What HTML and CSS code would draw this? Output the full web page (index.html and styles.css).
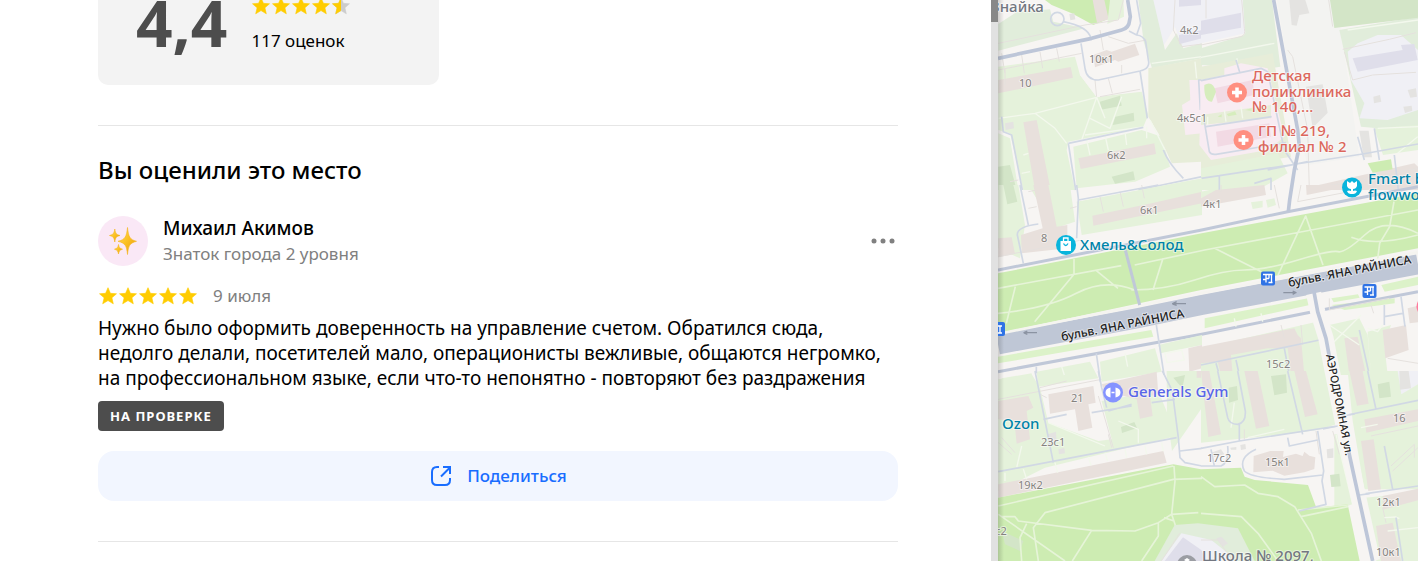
FILE: index.html
```html
<!DOCTYPE html>
<html lang="ru">
<head>
<meta charset="utf-8">
<meta name="viewport" content="width=device-width, initial-scale=1">
<title>Отзывы</title>
<link rel="stylesheet" href="styles.css">
</head>
<body>
<svg class="defs" aria-hidden="true">
  <defs>
    <path id="star" d="M10 1.7 12.4 7.3 18.5 7.8 13.9 11.8 15.3 17.8 10 14.6 4.7 17.8 6.1 11.8 1.5 7.8 7.6 7.3Z" stroke-width=".6" stroke-linejoin="round"/>
    <linearGradient id="gold" x1="0" x2="1" y1="0" y2="1">
      <stop offset="0" stop-color="#ffdf62"/><stop offset=".5" stop-color="#fbc021"/><stop offset="1" stop-color="#e59a10"/>
    </linearGradient>
    <linearGradient id="edge"><stop offset="0" stop-color="#000" stop-opacity=".16"/><stop offset="1" stop-color="#000" stop-opacity="0"/></linearGradient>
  </defs>
</svg>
<div class="layout">
  <main class="panel">
    <div class="content">
      <section class="summary">
        <div class="score">4,4</div>
        <div class="summary-side">
          <svg class="stars" viewBox="0 0 100 20" role="img" aria-label="4,4 из 5">
            <g class="on"><use href="#star"/><use href="#star" x="20"/><use href="#star" x="40"/><use href="#star" x="60"/></g>
            <use class="off" href="#star" x="80"/>
            <clipPath id="half"><path d="M80 0h10v20H80z"/></clipPath>
            <g clip-path="url(#half)"><use class="on" href="#star" x="80"/></g>
          </svg>
          <div class="count">117 оценок</div>
        </div>
      </section>
      <section class="review">
        <h2 class="title">Вы оценили это место</h2>
        <div class="author">
          <svg class="avatar" viewBox="0 0 50 50" aria-hidden="true">
            <circle cx="25" cy="25" r="25" fill="#fae8f6"/>
            <g fill="url(#gold)" stroke="#f5b51c" stroke-width=".6">
              <path d="M29.500 11.500C30.500 20.500 31.500 23.500 38.500 25.300 31.500 27.300 30.500 29.500 29.500 38.500 28.500 29.500 27.500 27.300 20 25.300 27.500 23.500 28.500 20.500 29.500 11.500Z"/>
              <path d="M16.800 13C17.500 17.500 18.300 18.500 22 19.500 18.300 20.500 17.500 21.500 16.800 26 16 21.500 15.300 20.500 11.500 19.500 15.300 18.500 16 17.500 16.800 13Z"/>
              <path d="M20.500 28.500C21 31.500 21.700 32.300 24.500 33.200 21.700 34.100 21 35 20.500 38 20 35 19.300 34.100 16.500 33.200 19.300 32.300 20 31.500 20.500 28.500Z"/>
            </g>
          </svg>
          <div class="who">
            <div class="name">Михаил Акимов</div>
            <div class="level">Знаток города 2 уровня</div>
          </div>
          <button class="more" type="button" aria-label="Ещё">
            <svg viewBox="0 0 24 6" aria-hidden="true"><circle cx="3" cy="3" r="2.500"/><circle cx="12" cy="3" r="2.500"/><circle cx="21" cy="3" r="2.500"/></svg>
          </button>
        </div>
        <div class="rate">
          <svg class="stars" viewBox="0 0 100 20" role="img" aria-label="5 из 5">
            <g class="on"><use href="#star"/><use href="#star" x="20"/><use href="#star" x="40"/><use href="#star" x="60"/><use href="#star" x="80"/></g>
          </svg>
          <time class="date">9 июля</time>
        </div>
        <p class="text">Нужно было оформить доверенность на управление счетом. Обратился сюда, недолго делали, посетителей мало, операционисты вежливые, общаются негромко, на профессиональном языке, если что-то непонятно - повторяют без раздражения</p>
        <span class="badge">НА ПРОВЕРКЕ</span>
        <button class="share" type="button">
          <svg viewBox="0 0 24 24" aria-hidden="true"><path d="M10 3H8Q3 3 3 8V16Q3 21 8 21H16Q21 21 21 16V14M12 12.500 20.500 4M14 3H21V10"/></svg>
          Поделиться
        </button>
      </section>
    </div>
    <div class="scrollbar"><div class="thumb"></div></div>
  </main>
  <aside class="map">
    <svg viewBox="0 0 420 561" preserveAspectRatio="xMinYMin slice" role="img" aria-label="Карта">
      <g transform="scale(.33333)">
        <!-- north-west block -->
        <g transform="translate(-39 0)">
          <path class="sage" d="M40 72 95 36 195 28 205 65 300 85 40 152Z"/>
          <path class="park" d="M180 0H400L375 55 325 75 260 40 200 15Z"/>
          <path class="bld" d="M323 0h35l13 58-35 10z"/>
          <path class="lawn" d="M375 0h40l2 50-50 22z"/>
          <path class="lilac" d="M502 0H651V130L590 140 570 80 525 155Z"/>
          <path class="sage" d="M460 0h45l35 150 35-50 20 45 56-15v45l-150 30-25-80z"/>
          <path class="lilac-b" d="M582 0h69v15l-69 5zM582 105l69-15v25l-69 18z"/>
          <path class="lawn" d="M40 200 270 170 285 225 335 290 470 275 490 345 475 380 250 425 245 450 270 570H115L75 400 40 390Z"/>
          <path class="lawn" d="M40 400 75 415 100 570H40Z"/>
          <path class="lawn" d="M265 440 470 390 530 410 555 500 450 545 275 565Z"/>
          <path class="white" d="M300 205 340 238 468 212 490 345 473 272 335 292 285 225Z"/>
          <path class="olive" d="M490 205 651 175V485L560 490 520 400 490 350Z"/>
          <path class="pink" d="M613 240h38v160l-50 5-10-90 25-15z"/>
          <path class="tree" d="M345 305l60-18 5 30-62 12zM383 375l8-25 55-12 2 25zM380 530l65-16 5 25-60 12zM40 500l35-5 20 75H40z"/>
          <path class="bld" d="M40 240 257 201 264 233 40 280ZM325 165 365 150 380 155 450 131 463 165 400 185 390 180 330 202ZM280 475 508 430 513 462 287 507ZM115 367 155 360 197 570H150Z"/>
          <path class="gray" d="M60 370l25-5 2 20-25 5zM253 42l15-2 3 18-15 3z"/>
          <path class="thin" d="M40 130 300 75 400 60 415 0M60 205v50M110 165l8 55M165 155l8 50M215 145l8 40M345 90l10 60M370 235l12 45M410 195v25M50 160l10 60M40 210 290 160M570 0 565 90 590 140 651 132M330 240l5 52M345 290l120-22M75 545l25-5M370 110l60 20 55-10"/>
          <path class="walk" d="M40 355 150 340 335 292 290 420M335 292 360 355M315 355 375 385 410 290M150 340 210 385 245 430M300 405 480 380M305 420l10 45M360 405l10 45M420 395l5 40M500 190l151-20M485 380v35M495 360l45 90M630 185l5 50M115 465l15-5M110 520l25-5"/>
          <path class="street" d="M288 130 300 205Q305 240 340 240L465 213Q497 205 490 180L482 125Q475 107 455 105L432 93M465 213 487 355M455 0 467 70 455 105M250 430 475 382M250 430 272 570M50 350 55 395 80 405 112 570M535 450Q550 490 595 535M651 240h-10l5 90M460 570 651 530"/>
          <circle class="street" cx="217" cy="57" r="20"/><path class="street" d="M235 65Q310 80 318 115"/>
        </g>
        <!-- north-east block -->
        <g transform="translate(609 0)">
          <path class="sage" d="M125 0h88l25 200-30 5L0 195v-50l130-40z"/>
          <path class="lilac" d="M0 0h125l8 100L0 130z"/>
          <path class="lilac-b" d="M0 62 120 38v45L0 105z"/>
          <path class="olive" d="M0 200 215 160 270 470 0 515Z"/>
          <path class="pink" d="M0 240 70 225v-20l50-15 80 15 50 205-50 40-170 30-35-45z"/>
          <path class="olive" d="M0 345 210 315v40L0 375z"/>
          <path class="rose" d="M40 265 155 240 160 285 50 310ZM45 395 205 370 210 410 50 440Z"/>
          <path class="tree2" d="M10 255q25-15 35 20l-12 30q-25 0-23-50zM50 350l12-8v10zM77 342l25-8 5 10-25 5zM132 330l20-5v8z"/>
          <path class="plaza" d="M228 0h160l32 90 55 380-155 25-25-90z"/>
          <path class="sage" d="M415 90 651 50V395L480 380Z"/>
          <path class="forest" d="M387 0H651V53L400 84Z"/>
          <path class="lilac" d="M440 155 470 130 530 105 600 105 651 150V330L560 360 475 355 490 310 450 240Z"/>
          <path class="lilac-b" d="M455 175 605 150 600 135 640 132 650 180 470 215Z"/>
          <path class="gray" d="M265 0h48l12 40-30 5-8 32-15-2zM315 260l50-7 15 85-45 45zM475 392h28l10 80h-25zM517 290l20-5 4 20-22 5zM620 270l25-5 3 25-20 3zM607 320l25-3 2 15-22 7z"/>
          <path class="lawn" d="M520 385l131-10v75l-105 15zM0 505l230-45 30 60-90 50H0z"/>
          <path class="bld" d="M330 560l310-70 11 10v70H330z"/>
          <path class="park" d="M500 490l70-12 5 30-60 10z"/>
          <path class="thin" d="M15 0v55M0 135l120-25q15-5 10-25L122 0M383 0l12 80M425 148l140-30 80-20M455 240l60-15 130-8M430 155l25 85M260 150l15 20 45 220 5 180M320 570l331-65"/>
          <path class="walk" d="M0 172 220 130M108 175v20M20 350v25M70 330l5 35M120 320l5 35M440 90l211-30M530 385l121-5M590 460l60-50"/>
          <path class="street" d="M0 242 180 205 200 215 250 450 290 510M10 365l15 90q5 10 20 8l210-35M15 380 212 350M105 180l12 40M0 535l55-8v43M55 527l430-65 166-30M160 550l50-15v35M200 510l120-25M470 410l20 70M520 385l15 95M580 465l12 105"/>
        </g>
        <!-- west block -->
        <g transform="translate(-39 555)">
          <path class="lawn" d="M40 0h60l20 120-15 100L40 190zM130 0h125l15 110-60 20-50-80zM275 50 651-20V90L290 150Z"/>
          <path class="tree" d="M55 0h30l12 50-30 8z"/>
          <path class="bld" d="M145 0h45l25 125 32-5v70L110 205l-2-55 65-20zM322 92 500 55 651 20V55L325 122ZM40 160l40-3 10 50-50 10z"/>
          <path class="thin" d="M345 35l10 45M405 20l10 45M470 0l8 40M40 215l250-50M130 70l25-5M130 20l20-4M255 70l20-5"/>
          <path class="street" d="M105 0l25 120M160 117Q95 125 97 150L115 235M275 0l5 40-5 120M280 45 520 0"/>
        </g>
        <!-- centre-east block -->
        <g transform="translate(609 555)">
          <path class="lawn" d="M0 20 50 10 55 40 0 55zM195 45l25-5 5 20-25 8zM150 52l35-5v20l-30 5z"/>
          <path class="bld" d="M45 15l145-15 5 30L0 65V40zM315 0h110l-8 10-100 20z"/>
          <path class="thin" d="M60 0v20M220 0l15 70M300 0l-10 50L445 20"/>
        </g>
        <!-- boulevard -->
        <path class="park" d="M0 820 611 700 919 643 1260 580V745L609 870 400 915 0 1000Z"/>
        <path class="park-walk" d="M0 865 370 797M228 777V823L110 965M52 860 25 970M295 812 360 865M0 940Q150 925 235 880T410 870M410 795 620 750 1260 630M495 775 465 870M400 870Q500 870 590 840T740 810 900 780 1020 755 1100 705 1260 700M650 745 790 815M840 825 923 648 975 795M1188 605 1175 680 1145 730 1138 785M1060 712Q1130 740 1260 705"/>
        <path class="strip" d="M0 1070 460 990 466 1010 290 1040 0 1090ZM620 955 930 895 935 915 620 985ZM1000 895l80-12 5 10-78 14ZM1150 855l110-25v25l-100 20ZM1000 915l190-20v15l-150 20Z"/>
        <path class="main" d="M0 1033 416 955 611 915 1260 793"/>
        <path class="verge" d="M0 1002 416 918 611 879 1260 757"/>
        <path class="avenue" d="M0 810 611 690 869 635 1260 560M0 1115 611 1003 959 932 1260 875"/>
        <path class="avenue" d="M382 750 425 915"/>
        <!-- south-west block -->
        <g transform="translate(-39 555)">
          <path class="lawn" d="M50 580 140 565V575l-90 25zM155 560l160-30 25 50-180 25zM345 530l165-40 20 70-180 30zM520 480l131-30v30l-125 25z"/>
          <path class="bld" d="M610 490l41-10v70l-38 10z"/>
          <path class="walk" d="M540 505l50-10 8 30-52 8zM230 545l8 25M420 505l8 40"/>
        </g>
        <g transform="translate(-39 1113)">
          <path class="lawn" d="M40 25 140 10 165 50 190 155 340 210 380 205 350 90 520 60 575 195 180 290 40 360ZM545 0h106v110l-90 130-15-110z"/>
          <path class="tree" d="M408 168l40-15 8 18-45 15zM565 20l35-8-8 40z"/>
          <path class="bld" d="M40 90 130 75 145 110 125 120 135 205 95 218 88 150 40 145ZM190 70 325 45 332 95 310 100 322 170 280 180 270 115 195 128ZM350 40 515 2 520 70 495 75 503 135 465 143 455 85 360 60ZM40 340 535 240 545 275 40 380ZM635 0h16v20h-16z"/>
          <path class="gray" d="M188 190l25-8 2 30-25 5zM220 235l18-4 2 16-18 3z"/>
          <path class="thin" d="M40 215l40 35M50 200l40 45M185 80l-20-10M165 50l80-20M340 75l45 155M370 190l10 40M40 85l310-60"/>
          <path class="walk" d="M190 155 360 225M110 225l-15 65M400 150l60 25 0 40M60 305v25M115 295l10 30M210 275l8 30M310 258l8 25M360 245l8 25M420 235l5 25M480 225l5 25M530 215l5 25"/>
          <path class="street" d="M150 0 205 275M40 302 575 200M175 145l70-15M340 0 350 50 365 110M320 125l120-20M370 120l70-20M500 95l70-10M532 0l30 60 18 140 5 60 15 15 51 10M585 240l66-8"/>
        </g>
        <g transform="translate(609 555)">
          <path class="lawn" d="M0 490 370 405 380 570H0ZM385 420l90-20 25 50 10 120H410ZM500 440l70-20-20 60 10 90h-50z"/>
          <path class="bld" d="M0 485 280 430 290 450 300 460 310 570H270L260 490 200 490 90 510 95 570H60L50 530 0 535ZM430 460l40-5 25 115h-50zM545 435l70-15 8 75-70 25zM620 370l31-8v50l-25 3z"/>
          <path class="walk" d="M385 420l90 60M480 390l-85 85M500 430l30 10 15-20M100 400l5 25M180 385l5 25"/>
          <path class="thin" d="M300 420l5 60M385 340v35l180-35M510 360l8 25M560 520l91 15M250 460l-10-40"/>
          <path class="street" d="M0 540 370 462M45 535l10 35M105 525l10 45M250 490l15 80M475 435l30 135M600 335l12 90M550 395l55-10M550 360v60"/>
        </g>
        <g transform="translate(609 1113)">
          <path class="lawn" d="M0 0H380L405 160 345 180 0 215ZM400 190l40-5 50 200-50 20-40 0zM440 0H651V355H490L455 150ZM490 380l161-15v205h-125z"/>
          <path class="white" d="M0 235 165 205 360 175 375 405 345 410 320 345 150 325 115 290 0 295Z"/>
          <path class="tree" d="M210 15l45-5 3 55-38 8zM83 50l25-5 3 42-27 8zM387 312l28-4 4 38-28 2zM530 40l35-8 5 45-35 5z"/>
          <path class="bld" d="M0 0h25l35 190-38 8zM130 0h40l35 165-40 8zM280 0h35l35 130-38 8zM445 0h40l18 98-35 6zM490 145l161-30v35l-155 35zM480 210l38-5 22 150-38 5zM545 375l106-22v35l-105 28zM525 465l50-10 25 115h-60zM158 255l50-15 40 0-2 18 39-10 20 7 5-13 15 12 18 5-3 35-30 10-60 10-35-15-58 5z"/>
          <path class="gray" d="M377 235l20-3v28l-18 2zM118 222l15-3 2 15-15 3zM88 230l18-2v8H90zM30 245l30-10 10 15-30 8z"/>
          <path class="lilac" d="M590 0h61v40l-50 30z"/>
          <path class="gray" d="M595 0h28l7 52-33 4z"/>
          <path class="thin" d="M130 205v-30M345 180l10 70M395 180l20 70M575 300l76-70M570 285l70-65v40M510 195l141-30M545 410l10 45"/>
          <path class="walk" d="M405 190 455 400M430 185l50 250 20 135M490 365l20 205M100 95l-10 75M140 200l110-25M550 440l35-2 10 5M560 480l91-10M480 170l50-10"/>
        </g>
        <!-- southern park -->
        <path class="park" d="M0 1493 526 1393 609 1408 729 1403 740 1430 770 1440 930 1455 955 1523 1049 1513 1085 1683H0Z"/>
        <g transform="translate(-39 1113)">
          <path class="tree" d="M50 480 115 510 105 540 60 520z"/>
          <path class="park-walk" d="M40 405 565 285M160 570 145 470 180 425 565 325 651 322M40 430 240 570M50 437H90L100 450 320 478 450 480 520 455 560 430 640 425M125 458 105 500 110 570M320 478 262 570M567 285 570 330 560 430 580 490M520 455v40l-50 75M537 440l30 10"/>
        </g>
        <path class="sage" d="M470 1683 530 1575 600 1570 720 1585 770 1683Z"/>
        <path class="lilac" d="M490 1683 550 1600 640 1620 690 1660 700 1683Z"/>
        <path class="lilac-b" d="M500 1683 555 1612 610 1650 625 1683Z"/>
        <path class="gray" d="M655 1615l15-5 20 20-15 10z"/>
        <path class="park-walk" d="M609 1430 650 1460 740 1455 780 1480 840 1490 890 1520 940 1600 970 1683M609 1540 730 1550 780 1600 840 1683M900 1530 1050 1515M909 1550 1050 1520"/>
        <path class="thin" d="M609 1620 660 1620 705 1683M545 1600 490 1683"/>
        <g transform="translate(609 1113)">
          <path class="street" d="M50 0 80 140Q85 160 110 160Q135 155 133 120L110 0M0 232 115 210 410 165M115 160v50M260 0 305 190M260 200l5 25 85-18M350 180l18 120-5 30 12 70-80 20M165 235Q110 260 130 300Q150 320 250 325L365 312M410 138 651 88M500 0l25 115M480 370 651 345M550 225l25 130M585 440l20 130M0 285h60q25-10 20-60M30 235l10 50"/>
        </g>
        <!-- through roads -->
        <path class="casing" d="M947 880 959 935 984 1015 1000 1100 1049 1343 1124 1683"/>
        <path class="street" d="M1019 1278 975 1287M1019 1251 1070 1242M1085 1485l30-4"/>
        <path class="road" d="M947 870 959 935 984 1015 996 1080M1051 1350 1124 1683"/>
        <path class="road" d="M827 0 899 390 904 440 889 510 875 600 871 635"/>
        <path class="road" d="M0 175 281 115 371 90Q393 85 395 60L397 50 389 0"/>
        <path class="street" d="M475 975 498 1125M295 1060l12 85M115 1100v20"/>
        <path class="arrow" d="M117 998H78l10-5M78 999l10 4M564 911H524l12-6M524 912l12 4M856 878h38l-10-5M894 877l-10 6M1005 823l-20 4"/>
      </g>
      <rect width="6" height="561" fill="url(#edge)"/>
      <!-- pins -->
      <g fill="#ff8f80"><circle cx="239" cy="92.500" r="10"/><circle cx="245.500" cy="140" r="10"/></g>
      <path d="M239 87.500v10M234 92.500h10M245.500 135v10M240.500 140h10" stroke="#fff" stroke-width="3.500"/>
      <circle cx="68" cy="245" r="10" fill="#09b4dc"/>
      <path d="M62.500 241h10.500v10H62.500z" fill="#fff"/><path d="M65.500 241v-3h4.500v3" fill="none" stroke="#fff" stroke-width="1.300"/><path d="M65.500 243.500q2.300 4 4.500 0" fill="none" stroke="#09b4dc" stroke-width="1.300"/>
      <circle cx="354" cy="187.500" r="10" fill="#09b4dc"/>
      <path d="M349 181l3 2 2-2 2 2 3-2v5q-1 3-4 3v2q2-1 4 0-1 3-4 3h-2q-3 0-4-3 2-1 4 0v-2q-3 0-4-3z" fill="#fff"/>
      <circle cx="115" cy="392.500" r="10" fill="#8593ff"/>
      <path d="M112.500 387.500v10q-5-1-5-5t5-5zM117.500 387.500v10q5-1 5-5t-5-5z" fill="#fff"/><path d="M113.500 392.500h3" stroke="#fff" stroke-width="1.500"/>
      <g fill="#2f73e5"><rect x="263" y="271.500" width="14" height="14" rx="2"/><rect x="364.500" y="284" width="14" height="14" rx="2"/><rect x="-7" y="322" width="14" height="14" rx="2"/></g>
      <g fill="none" stroke="#fff" stroke-width="1.300">
        <path id="stop" d="M265 274.500h9.500M268 274.500v5h-3M271 274.500v4M273.500 274.500v7.500M268 278.500h3M268 278.500v4M270.500 282.500h4"/>
        <use href="#stop" x="101.500" y="12.500"/><path d="M0 326h4M2 326v7M0 333h4"/>
      </g>
      <circle cx="189" cy="565" r="10" fill="#9b9da3"/><path d="M186 560l3-2 3 2-3 2z" fill="#fff"/>
      <path d="M420 301v11q-3-5 0-11z" fill="#ff7a9c"/>
      <!-- labels -->
      <g class="num">
        <text x="21" y="87">10</text><text x="91" y="63">10к1</text><text x="182" y="34">4к2</text><text x="179" y="122">4к5с1</text>
        <text x="109" y="159">6к2</text><text x="43" y="242">8</text><text x="142" y="214">6к1</text><text x="205" y="208">4к1</text>
        <text x="268" y="368">15с2</text><text x="73" y="402">21</text><text x="43" y="446">23с1</text><text x="20" y="489">19к2</text>
        <text x="-3" y="535">с2</text><text x="209" y="462">17с2</text><text x="267" y="466">15к1</text><text x="395" y="422">16</text>
        <text x="378" y="506">12к1</text><text x="378" y="556">10к1</text>
      </g>
      <g class="poi red"><text x="254" y="81">Детская</text><text x="254" y="97">поликлиника</text><text x="254" y="112">№ 140,...</text><text x="260" y="136">ГП № 219,</text><text x="260" y="152">филиал № 2</text></g>
      <g class="poi teal"><text x="82" y="250">Хмель&amp;Солод</text><text x="370" y="184">Fmart by</text><text x="370" y="200">flowwow</text><text x="4" y="429">Ozon</text></g>
      <text class="poi violet" x="130" y="397">Generals Gym</text>
      <g class="poi dim"><text x="-7" y="12">Знайка</text><text x="204" y="561">Школа № 2097,</text></g>
      <g class="way"><text transform="translate(64 341) rotate(-11)">бульв. ЯНА РАЙНИСА</text><text transform="translate(291 287) rotate(-11)">бульв. ЯНА РАЙНИСА</text><text class="small" transform="translate(328 355) rotate(79)">АЭРОДРОМНАЯ ул.</text></g>
    </svg>
  </aside>
</div>
</body>
</html>
```
FILE: styles.css
```css
* { box-sizing: border-box; }
body { margin: 0; background: #fff; color: #000; font-family: "Noto Sans", "Open Sans", sans-serif; }
button { font: inherit; border: 0; padding: 0; background: none; cursor: pointer; }
.defs { position: absolute; width: 0; height: 0; }
.layout { display: grid; grid-template-columns: minmax(0, 998fr) minmax(0, 420fr); height: 100vh; overflow: hidden; }
.panel { display: flex; min-width: 0; overflow: hidden; }
.content { flex: 1; min-width: 0; padding: 0 93px 0 98px; }
.scrollbar { width: 7px; background: #e1e1e1; }
.thumb { height: 22px; background: #888; }

.summary { display: flex; align-items: flex-end; gap: 24px; width: 341px; max-width: 100%; height: 85px; padding: 0 38px 32px; background: #f3f3f3; border-radius: 0 0 10px 10px; }
.score { color: #4d4d4d; font-size: 64px; font-weight: 700; line-height: 60px; }
.stars { display: block; width: 100px; height: 20px; }
.on { fill: #fc0; stroke: #fc0; }
.off { fill: #ccc; stroke: #ccc; }
.count { margin-top: 13px; font-size: 17px; line-height: 24px; }

.review { display: flex; flex-direction: column; margin-top: 40px; padding: 28px 0 40px; border-top: 1px solid #e6e6e6; border-bottom: 1px solid #e6e6e6; }
.title { margin: 0 0 29px; font-size: 24px; font-weight: 500; line-height: 32px; }
.author { display: flex; align-items: center; gap: 15px; }
.avatar { width: 50px; height: 50px; }
.who { flex: 1; }
.name { font-size: 19px; font-weight: 500; line-height: 26px; }
.level, .date { color: #808080; font-size: 17px; line-height: 26px; }
.more { padding: 8px 3px; }
.more svg { display: block; width: 24px; height: 6px; fill: #808080; }
.rate { display: flex; align-items: center; gap: 15px; margin-top: 16px; }
.text { margin: 7px 0 10px; font-size: 19px; line-height: 25px; }
.badge { align-self: flex-start; padding: 0 12px; border-radius: 4px; background: #4d4d4d; color: #fff; font-size: 13px; font-weight: 700; line-height: 30px; letter-spacing: 1px; }
.share { display: flex; align-items: center; justify-content: center; gap: 14px; height: 50px; margin-top: 20px; padding-bottom: 1px; border-radius: 16px; background: #f2f6ff; color: #196dff; font-size: 17px; font-weight: 500; }
.share svg { width: 24px; height: 24px; fill: none; stroke: #196dff; stroke-width: 2; }

.map { min-width: 0; background: #f7f5f3; overflow: hidden; }
.map > svg { display: block; width: 100%; height: 100%; }
.lawn { fill: #e5f2db; }
.sage { fill: #e1eddb; }
.olive { fill: #e7edd9; }
.park { fill: #cdecb2; }
.strip { fill: #dcf2c9; }
.forest { fill: #d3e5c7; }
.tree { fill: #d3e5c8; }
.tree2 { fill: #d6edbd; }
.lilac { fill: #f0f0f5; }
.lilac-b { fill: #dfdeea; }
.pink { fill: #f8ecf2; }
.rose { fill: #f2dae4; }
.plaza { fill: #f3f3f1; }
.gray { fill: #e4e3e1; }
.bld { fill: #e8e0dc; }
.white { fill: #f7f5f3; }
.thin, .walk, .street, .avenue, .road, .main, .casing, .park-walk, .verge, .arrow { fill: none; stroke-linejoin: round; }
.thin { stroke: #e5e1de; stroke-width: 3; }
.walk { stroke: #f3f8ed; stroke-width: 4; }
.park-walk { stroke: #e6f4d8; stroke-width: 5; }
.street { stroke: #d1d8e4; stroke-width: 5; }
.avenue { stroke: #c0c8d8; stroke-width: 9; }
.road { stroke: #bdc6d8; stroke-width: 11; }
.casing { stroke: #f7f5f3; stroke-width: 46; }
.main { stroke: #bfc7d6; stroke-width: 60; }
.verge { stroke: #f5f4f0; stroke-width: 8; }
.arrow { stroke: #8b93a2; stroke-width: 4; }

.map text { paint-order: stroke; stroke: #ffffff80; stroke-width: 2px; stroke-linejoin: round; }
.num { fill: #85827f; font-size: 11px; }
.poi { font-size: 15px; font-weight: 500; }
.red { fill: #dc675c; }
.teal { fill: #0083a8; }
.violet { fill: #5865e8; }
.dim { fill: #737781; }
.way { fill: #222; font-size: 12px; font-weight: 500; }
.small { font-size: 11px; }
```
